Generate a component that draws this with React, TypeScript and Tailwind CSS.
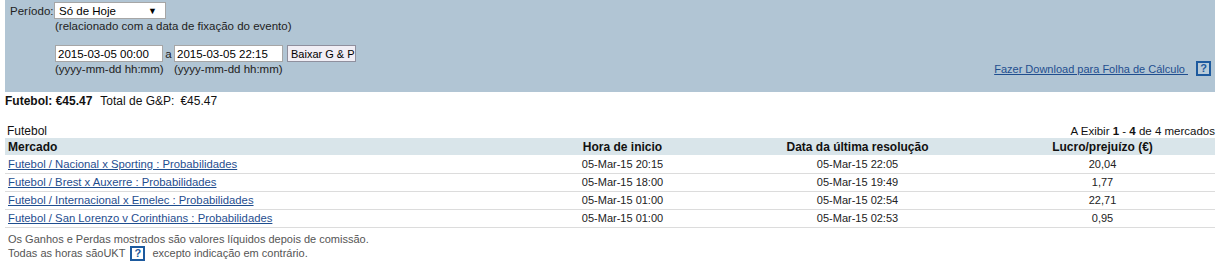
import React from 'react';

const rows = [
	{ market: 'Futebol / Nacional x Sporting : Probabilidades', start: '05-Mar-15 20:15', settled: '05-Mar-15 22:05', pl: '20,04' },
	{ market: 'Futebol / Brest x Auxerre : Probabilidades', start: '05-Mar-15 18:00', settled: '05-Mar-15 19:49', pl: '1,77' },
	{ market: 'Futebol / Internacional x Emelec : Probabilidades', start: '05-Mar-15 01:00', settled: '05-Mar-15 02:54', pl: '22,71' },
	{ market: 'Futebol / San Lorenzo v Corinthians : Probabilidades', start: '05-Mar-15 01:00', settled: '05-Mar-15 02:53', pl: '0,95' },
];

const HelpBox = () => (
	<span className="inline-flex items-center justify-center w-[15px] h-[15px] border-2 border-[#1d5a9e] text-[#1d5a9e] font-bold text-[11px] leading-none bg-white/10">
		?
	</span>
);

const DateField = ({ value, width }: { value: string; width: string }) => (
	<div className={`${width} h-[17px] bg-white border border-[#a6a6a6] pl-[2px] flex items-center text-[11.5px] text-black`}>
		{value}
	</div>
);

export default function App() {
	return (
		<div className="w-[1222px] h-[263px] bg-white text-[11px] leading-[14px] text-[#222] font-['Liberation_Sans',Arial,sans-serif] overflow-hidden">
			{/* filter panel */}
			<div className="ml-[5px] w-[1210px] h-[92px] bg-[#b1c5d4] flex flex-row">
				<div className="flex flex-col pt-[2px] grow">
					<div className="flex flex-row items-center h-[17px]">
						<span className="w-[49px] pl-[5px] text-[11.5px] text-[#222]">Período:</span>
						<div className="w-[112px] h-[17px] bg-white border border-[#a6a6a6] flex items-center justify-between pl-[4px] pr-[8px] text-[11.5px] text-black">
							<span>Só de Hoje</span>
							<span className="text-[9px]">▼</span>
						</div>
					</div>
					<div className="pl-[50px] h-[14px] text-[11.5px] text-[#222]">
						(relacionado com a data de fixação do evento)
					</div>
					<div className="flex flex-row items-center pl-[50px] mt-[12px] h-[17px]">
						<DateField value="2015-03-05 00:00" width="w-[108px]" />
						<span className="w-[11px] text-center text-[11.5px]">a</span>
						<DateField value="2015-03-05 22:15" width="w-[109px]" />
						<div className="ml-[4px] w-[69px] h-[17px] bg-[#f1eef5] border border-[#8f8f9d] flex items-center pl-[3px] text-[11px] text-black whitespace-nowrap overflow-hidden">
							Baixar G &amp; P
						</div>
					</div>
					<div className="flex flex-row pl-[50px] text-[11.5px] text-[#222]">
						<span className="w-[119px]">(yyyy-mm-dd hh:mm)</span>
						<span>(yyyy-mm-dd hh:mm)</span>
					</div>
				</div>
				<div className="flex flex-row items-start pt-[61px] pr-[4px]">
					<a href="#" className="text-[11px] text-[#1f4e8f] underline mt-[1px] mr-[8px]">
						Fazer Download para Folha de Cálculo&nbsp;
					</a>
					<HelpBox />
				</div>
			</div>

			{/* totals */}
			<div className="pl-[5px] mt-[2px] h-[14px] flex flex-row items-center text-[12px] text-[#111]">
				<span className="font-bold">Futebol: €45.47</span>
				<span className="ml-[8px]">Total de G&amp;P:</span>
				<span className="ml-[6px]">€45.47</span>
			</div>

			{/* market list */}
			<div className="mt-[16px] ml-[5px] w-[1210px]">
				<div className="flex flex-row justify-between h-[14px] text-[#111]">
					<span className="pl-[2px] text-[12px]">Futebol</span>
					<span className="text-[11.5px]">
						A Exibir <b>1</b> - <b>4</b> de 4 mercados
					</span>
				</div>
				<table className="w-full border-collapse table-fixed text-[11px]">
					<colgroup>
						<col className="w-[515px]" />
						<col className="w-[205px]" />
						<col className="w-[265px]" />
						<col className="w-[225px]" />
					</colgroup>
					<thead>
						<tr className="bg-[#d9e5ea] h-[17px] text-[#111] text-[12px]">
							<th className="text-left pl-[3px] font-bold">Mercado</th>
							<th className="text-center font-bold">Hora de inicio</th>
							<th className="text-center font-bold">Data da última resolução</th>
							<th className="text-center font-bold">Lucro/prejuízo (€)</th>
						</tr>
					</thead>
					<tbody>
						{rows.map((r) => (
							<tr key={r.market} className="h-[18px] border-b border-[#dcdcdc] text-[#222]">
								<td className="pl-[3px]">
									<a href="#" className="text-[11.3px] text-[#1f4e8f] underline">
										{r.market}
									</a>
								</td>
								<td className="text-center">{r.start}</td>
								<td className="text-center">{r.settled}</td>
								<td className="text-center">{r.pl}</td>
							</tr>
						))}
					</tbody>
				</table>
				<div className="pl-[3px] pt-[4px] text-[11px] text-[#555] leading-[14px]">
					<div>Os Ganhos e Perdas mostrados são valores líquidos depois de comissão.</div>
					<div className="flex flex-row items-center">
						<span>Todas as horas sãoUKT</span>
						<span className="ml-[5px] mr-[7px] flex">
							<HelpBox />
						</span>
						<span>excepto indicação em contrário.</span>
					</div>
				</div>
			</div>
		</div>
	);
}
